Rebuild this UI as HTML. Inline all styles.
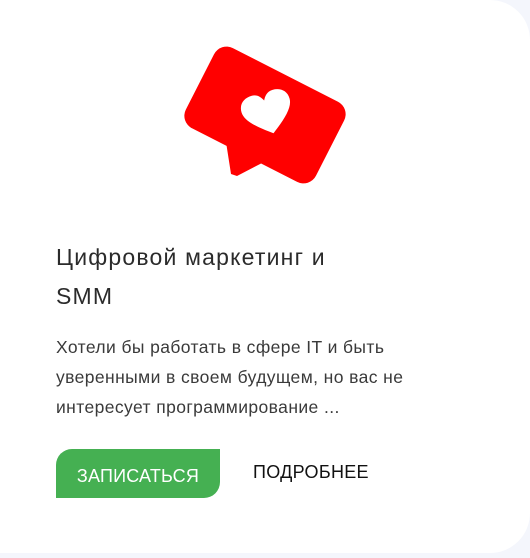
<!DOCTYPE html>
<html><head><meta charset="utf-8"><style>
body{margin:0;width:530px;height:558px;background:#f4f6fc;font-family:"Liberation Sans",sans-serif;overflow:hidden}
.card{position:absolute;left:0;top:0;width:530px;height:553px;background:#fff;border-radius:0 40px 40px 0}
h2{position:absolute;left:56px;top:238px;margin:0;font-weight:400;font-size:23px;letter-spacing:1.2px;line-height:39px;color:#2b2b2b;width:440px}
p{position:absolute;left:56px;top:332px;margin:0;font-size:17.5px;letter-spacing:0.4px;line-height:30px;color:#3a3a3a;width:470px}
.btn{position:absolute;left:56px;top:449px;width:164px;height:49px;background:#45b052;border-radius:16px 0 16px 0;color:#fff;font-size:18px;letter-spacing:0.2px;text-align:center;line-height:54px}
.more{position:absolute;left:253px;top:462px;font-size:18px;letter-spacing:0.3px;color:#111}
</style></head><body>
<div class="card"></div>
<svg style="position:absolute;left:0;top:0" width="530" height="260">
<g transform="translate(265,115) rotate(27)">
<rect x="-73" y="-45" width="146" height="90" rx="14" fill="#ff0000"/>
</g>
<polygon points="226,142 231,174 237,176 264,162" fill="#ff0000"/>
<g transform="translate(268,114) rotate(-16)">
<path d="M0,20 C-15,9 -25,0 -25,-9 C-25,-18 -18,-22 -11,-22 C-5,-22 -2,-18 0,-14 C2,-18 5,-22 11,-22 C18,-22 25,-18 25,-9 C25,0 15,9 0,20Z" fill="#fff"/>
</g>
</svg>
<h2>Цифровой маркетинг и<br>SMM</h2>
<p>Хотели бы работать в сфере IT и быть<br>уверенными в своем будущем, но вас не<br>интересует программирование ...</p>
<div class="btn">ЗАПИСАТЬСЯ</div>
<div class="more">ПОДРОБНЕЕ</div>
</body></html>
